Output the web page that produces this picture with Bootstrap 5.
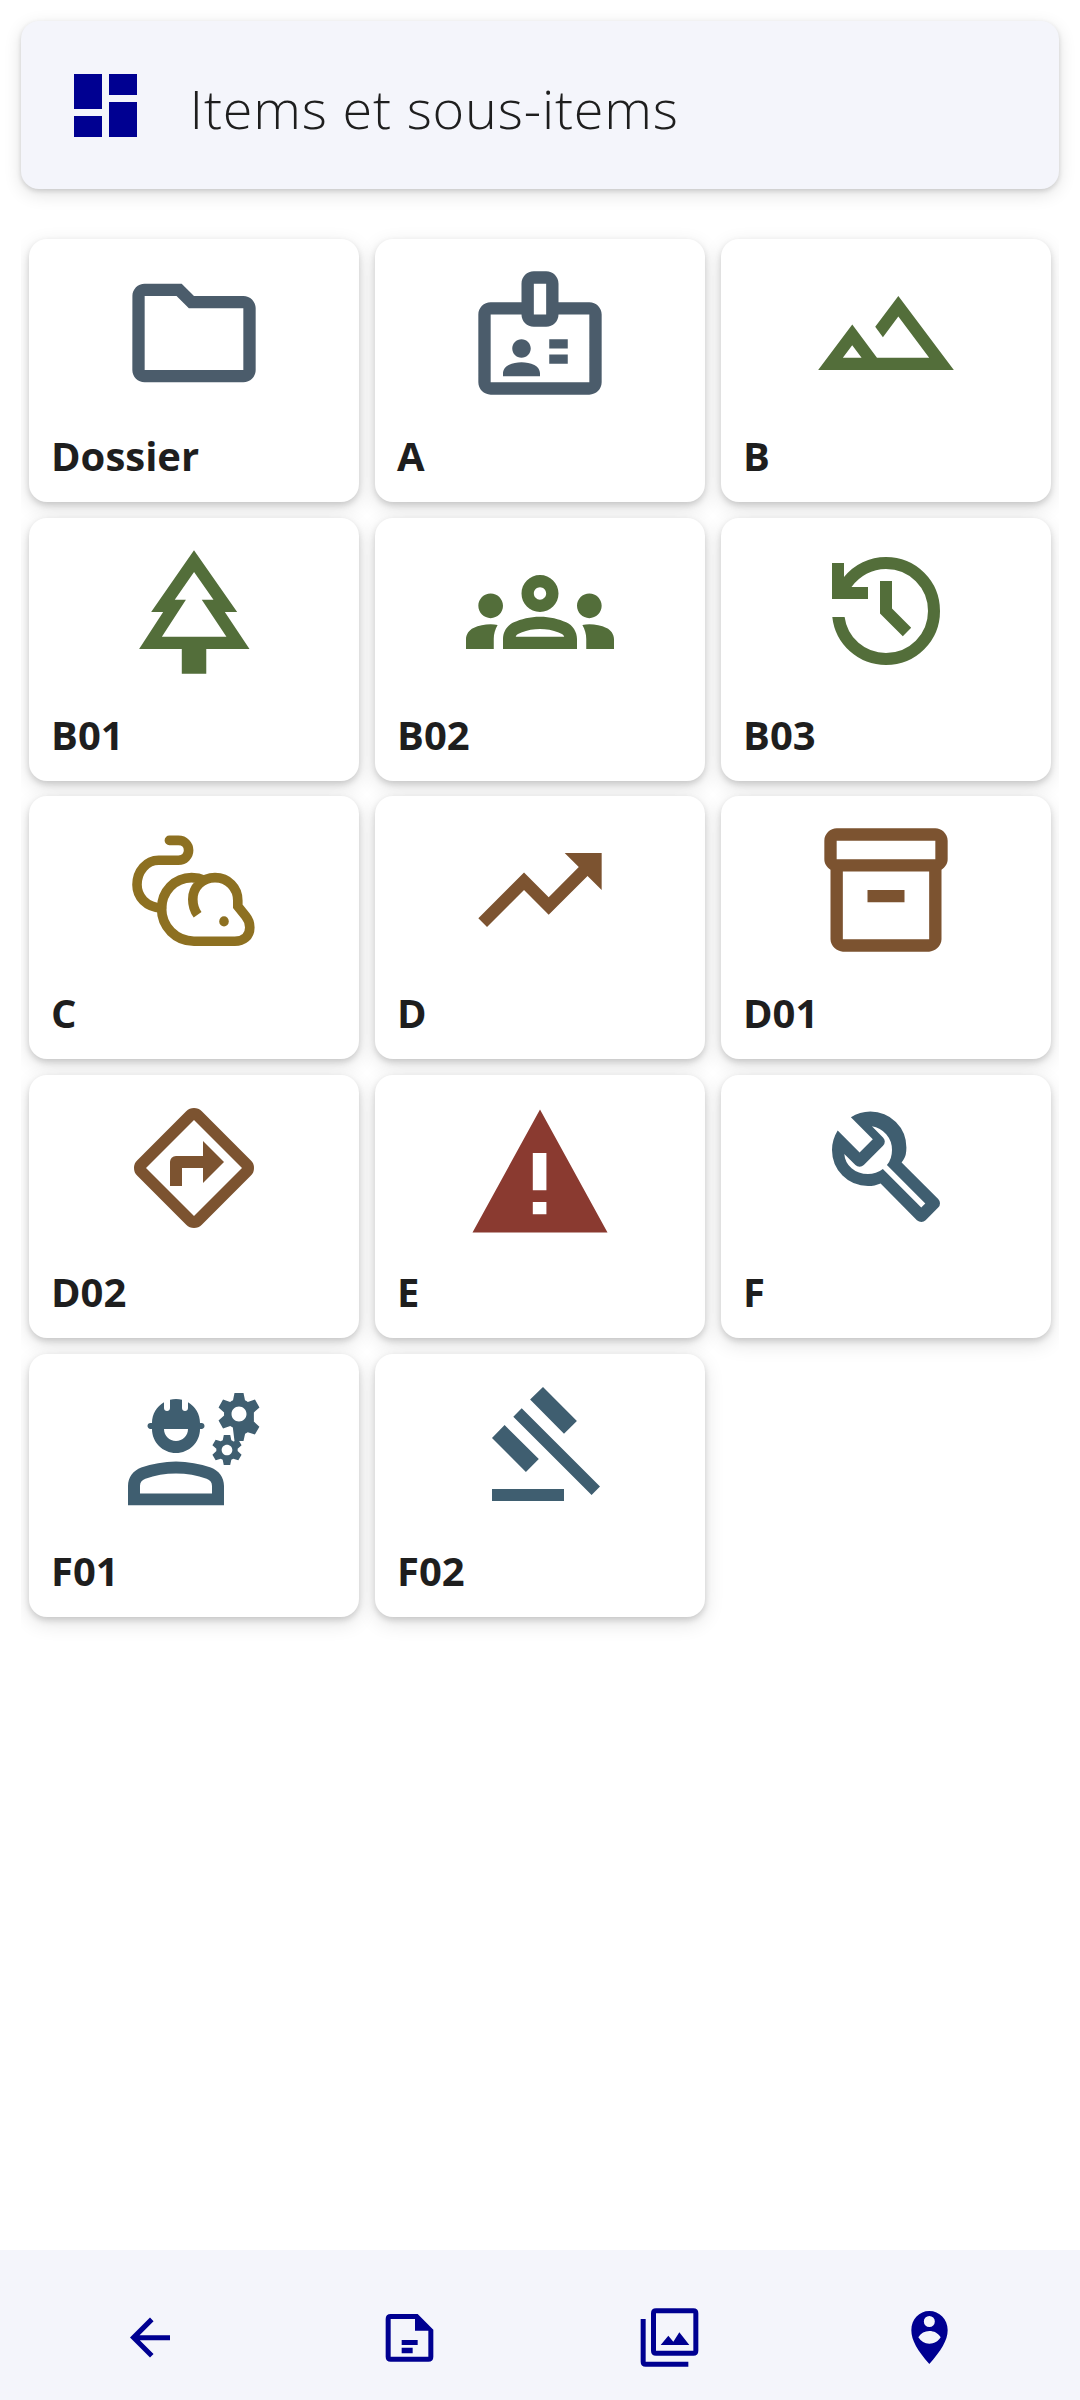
<!DOCTYPE html>
<html lang="fr">
<head>
    <meta charset="UTF-8">
    <meta name="viewport" content="width=device-width, initial-scale=1.0">
    <title>Items et sous-items</title>
    <link href="https://cdn.jsdelivr.net/npm/bootstrap@5.3.0/dist/css/bootstrap.min.css" rel="stylesheet">
    <style>
        html, body { height: 100%; }
        body { font-family: "Open Sans", "Liberation Sans", sans-serif; color: #1e1e1e; background: #fff; }
        .page-wrap { height: 2400px; }
        .head-bar { margin: 21px 21px 0; height: 168px; background: #f4f5fb; border-radius: 18px; padding-left: 52.5px; gap: 53px; box-shadow: 0 2px 5px rgba(0, 0, 0, .14), 0 5px 18px rgba(0, 0, 0, .12); }
        .head-bar svg { width: 63px; height: 63px; fill: #000091; }
        .head-title { font-size: 54px; font-weight: 300; line-height: 1; letter-spacing: .8px; margin: 5px 0 0; }
        .tile-clip { margin: 34px 21px 0; padding: 16px 8px 40px; overflow: hidden; }
        .tile-row { --bs-gutter-x: 16px; --bs-gutter-y: 15.67px; }
        .tile { height: 263px; border: 0; border-radius: 18px; box-shadow: 0 3px 6px rgba(0, 0, 0, .15), 0 6px 20px rgba(0, 0, 0, .12); }
        .tile svg { width: 148px; height: 148px; margin: 20px auto 0; display: block; }
        .tile svg.glyph-fit { width: 144px; height: 144px; margin-top: 21px; }
        .tile-name { font-size: 40px; font-weight: 700; line-height: 1; padding: 0 22px 26px; }
        .tint-slate { fill: #4b5c6b; }
        .tint-green { fill: #536e3a; }
        .tint-gold { fill: #8d7021; }
        .tint-brown { fill: #7c5330; }
        .tint-red { fill: #8a3a30; }
        .tint-blue { fill: #3f5e70; }
        .foot-bar { height: 150px; background: #f4f5fb; padding: 45px 20px 25px; }
        .foot-bar svg { width: 80px; height: 80px; fill: #000091; }
    </style>
</head>
<body>
    <div class="page-wrap d-flex flex-column">
        <div class="head-bar d-flex align-items-center">
            <svg viewBox="3 3 18 18"><path d="M3 13h8V3H3v10zm0 8h8v-6H3v6zm10 0h8V11h-8v10zm0-18v6h8V3h-8z"/></svg>
            <h1 class="head-title">Items et sous-items</h1>
        </div>

        <div class="tile-clip flex-grow-1">
            <div class="row row-cols-3 tile-row">
                <div class="col">
                    <div class="card tile">
                        <svg viewBox="0 0 24 24" class="tint-slate"><path d="M9.17 6l2 2H20v10H4V6h5.17M10 4H4c-1.1 0-1.99.9-1.99 2L2 18c0 1.1.9 2 2 2h16c1.1 0 2-.9 2-2V8c0-1.1-.9-2-2-2h-8l-2-2z"/></svg>
                        <div class="tile-name mt-auto">Dossier</div>
                    </div>
                </div>
                <div class="col">
                    <div class="card tile">
                        <svg viewBox="0 0 24 24" class="tint-slate"><path d="M20 7h-5V4c0-1.1-.9-2-2-2h-2c-1.1 0-2 .9-2 2v3H4c-1.1 0-2 .9-2 2v11c0 1.1.9 2 2 2h16c1.1 0 2-.9 2-2V9c0-1.1-.9-2-2-2zM11 7V4h2v5h-2V7zm9 13H4V9h5c0 1.1.9 2 2 2h2c1.1 0 2-.9 2-2h5v11zm-11-4c.83 0 1.5-.67 1.5-1.5S9.83 13 9 13s-1.5.67-1.5 1.5S8.17 16 9 16zm2.08 1.18c-.64-.28-1.34-.43-2.08-.43s-1.44.15-2.08.43C6.36 17.42 6 17.97 6 18.58V19h6v-.42c0-.61-.36-1.16-.92-1.4zM13.5 13h3v1.5h-3zM13.5 15.5h3V17h-3z"/></svg>
                        <div class="tile-name mt-auto">A</div>
                    </div>
                </div>
                <div class="col">
                    <div class="card tile">
                        <svg viewBox="0 0 24 24" class="tint-green"><path d="M14 6l-3.75 5 1.25 1.67L14 9.33 19 16h-8.46l-4.01-5.37L1 18h22L14 6zM5 16l1.52-2.03L8.04 16H5z"/></svg>
                        <div class="tile-name mt-auto">B</div>
                    </div>
                </div>

                <div class="col">
                    <div class="card tile">
                        <svg viewBox="0 0 24 24" class="tint-green"><path d="M17,12h2L12,2L5.05,12H7l-3.9,6h6.92v4h3.97v-4H21L17,12z M6.79,16l3.9-6H8.88l3.13-4.5l3.15,4.5h-1.9l4,6H6.79z"/></svg>
                        <div class="tile-name mt-auto">B01</div>
                    </div>
                </div>
                <div class="col">
                    <div class="card tile">
                        <svg viewBox="0 0 24 24" class="tint-green"><path d="M4,13c1.1,0,2-0.9,2-2c0-1.1-0.9-2-2-2s-2,0.9-2,2C2,12.1,2.9,13,4,13z M5.13,14.1C4.76,14.04,4.39,14,4,14 c-0.99,0-1.93,0.21-2.78,0.58C0.48,14.9,0,15.62,0,16.43V18l4.5,0v-1.61C4.5,15.56,4.73,14.78,5.13,14.1z M20,13c1.1,0,2-0.9,2-2 c0-1.1-0.9-2-2-2s-2,0.9-2,2C18,12.1,18.9,13,20,13z M24,16.43c0-0.81-0.48-1.53-1.22-1.85C21.93,14.21,20.99,14,20,14 c-0.39,0-0.76,0.04-1.13,0.1c0.4,0.68,0.63,1.46,0.63,2.29V18l4.5,0V16.43z M16.24,13.65c-1.17-0.52-2.61-0.9-4.24-0.9 c-1.63,0-3.07,0.39-4.24,0.9C6.68,14.13,6,15.21,6,16.39V18h12v-1.61C18,15.21,17.32,14.13,16.24,13.65z M8.07,16 c0.09-0.23,0.13-0.39,0.91-0.69c0.97-0.38,1.99-0.56,3.02-0.56s2.05,0.18,3.02,0.56c0.77,0.3,0.81,0.46,0.91,0.69H8.07z M12,8 c0.55,0,1,0.45,1,1s-0.45,1-1,1s-1-0.45-1-1S11.45,8,12,8 M12,6c-1.66,0-3,1.34-3,3c0,1.66,1.34,3,3,3s3-1.34,3-3 C15,7.34,13.66,6,12,6L12,6z"/></svg>
                        <div class="tile-name mt-auto">B02</div>
                    </div>
                </div>
                <div class="col">
                    <div class="card tile">
                        <svg viewBox="0 -960 960 960" class="tint-green glyph-fit"><path d="M480-120q-138 0-240.5-91.5T122-440h82q14 104 92.5 172T480-200q117 0 198.5-81.5T760-480q0-117-81.5-198.5T480-760q-69 0-129 32t-101 88h110v80H120v-240h80v94q51-64 124.5-99T480-840q150 0 255 105t105 255q0 150-105 255T480-120Zm112-192L440-464v-216h80v184l128 128-56 56Z"/></svg>
                        <div class="tile-name mt-auto">B03</div>
                    </div>
                </div>

                <div class="col">
                    <div class="card tile">
                        <svg viewBox="0 0 24 24" class="tint-gold glyph-fit">
                            <g fill="none" stroke="#8d7021" stroke-width="1.6" stroke-linecap="round">
                                <path d="M7.9 3.9h1.5c1 0 1.7.75 1.7 1.65s-.7 1.65-1.7 1.65H6.1c-2 0-3.6 1.8-3.6 4.1 0 2 1.5 3.7 4.1 3.9"/>
                                <path d="M12.6 16.3c-.5-.7-.8-1.6-.8-2.6 0-2 1.6-3.6 3.7-3.6 2.2 0 3.8 1.7 3.8 3.8v1l1.3 1.6c.5.6.7 1.2.7 1.9 0 1.5-1.1 2.3-2.5 2.3H12c-3 0-5.4-2.4-5.4-5.4 0-2.9 2.2-5.2 5-5.2.8 0 1.6.2 2.3.5" stroke-linecap="butt"/>
                            </g>
                            <ellipse cx="17" cy="17.4" rx=".8" ry=".85"/>
                        </svg>
                        <div class="tile-name mt-auto">C</div>
                    </div>
                </div>
                <div class="col">
                    <div class="card tile">
                        <svg viewBox="0 0 24 24" class="tint-brown"><path d="M16 6l2.29 2.29-4.88 4.88-4-4L2 16.59 3.41 18l6-6 4 4 6.3-6.29L22 12V6z"/></svg>
                        <div class="tile-name mt-auto">D</div>
                    </div>
                </div>
                <div class="col">
                    <div class="card tile">
                        <svg viewBox="0 0 24 24" class="tint-brown"><path d="M20 2H4c-1 0-2 .9-2 2v3.01c0 .72.43 1.34 1 1.69V20c0 1.1 1.1 2 2 2h14c.9 0 2-.9 2-2V8.7c.57-.35 1-.97 1-1.69V4c0-1.1-1-2-2-2zm-1 18H5V9h14v11zm1-13H4V4h16v3z"/><path d="M9 12h6v2H9z"/></svg>
                        <div class="tile-name mt-auto">D01</div>
                    </div>
                </div>

                <div class="col">
                    <div class="card tile">
                        <svg viewBox="0 -960 960 960" class="tint-brown glyph-fit" fill-rule="evenodd"><path d="M480-80q-15 0-28-5t-24-17L102-428q-12-11-17-24t-5-28q0-15 5-28t17-24l326-326q11-12 24-17t28-5q15 0 28 5t24 17l326 326q12 11 17 24t5 28q0 15-5 28t-17 24L532-102q-11 12-24 17t-28 5ZM480-160l320-320-320-320-320 320 320 320ZM320-360h80v-120h140v100l140-140-140-140v100H360q-17 0-28.5 11.5T320-520v160Z"/></svg>
                        <div class="tile-name mt-auto">D02</div>
                    </div>
                </div>
                <div class="col">
                    <div class="card tile">
                        <svg viewBox="0 0 24 24" class="tint-red glyph-fit" fill-rule="evenodd"><path d="M.75 22.75h22.5L12 2.25zM10.8 9.5h2.27v6.2H10.8zM10.8 17.65h2.27v2.05H10.8z"/></svg>
                        <div class="tile-name mt-auto">E</div>
                    </div>
                </div>
                <div class="col">
                    <div class="card tile">
                        <svg viewBox="0 -960 960 960" class="tint-blue glyph-fit"><path d="M686-132 444-376q-20 8-40.5 12t-43.5 4q-100 0-170-70t-70-170q0-36 10-68.5t28-61.5l146 146 88-88-146-146q29-18 61.5-28t68.5-10q100 0 170 70t70 170q0 23-4 43.5T584-516l244 242q12 12 12 29t-12 29l-84 84q-12 12-28 12t-30-12Zm29-85 27-27-256-256q18-20 26-46.5t8-53.5q0-60-38.5-104.5T386-758l74 74q12 12 12 28t-12 28L332-500q-12 12-28 12t-28-12l-74-74q4 57 48.5 95.5T360-440q26 0 52-8t47-25l256 256Z"/></svg>
                        <div class="tile-name mt-auto">F</div>
                    </div>
                </div>

                <div class="col">
                    <div class="card tile">
                        <svg viewBox="0 0 24 24" class="tint-blue glyph-fit">
                            <path fill-rule="evenodd" d="M1 21.7v-3.2c0-1.5.9-2.6 2.2-3.1C5 14.8 7 14.4 9 14.4s4 .4 5.8 1c1.3.5 2.2 1.6 2.2 3.1v3.2zM3 19.75h12V18.5c0-.6-.3-1-.9-1.2C12.5 16.7 10.8 16.4 9 16.4s-3.5.3-5.1.9c-.6.2-.9.6-.9 1.2z"/>
                            <path d="M4.74 9H5c0 2.21 1.79 4 4 4s4-1.79 4-4h.26c.27 0 .49-.22.49-.49v-.02c0-.27-.22-.49-.49-.49H13c0-1.48-.81-2.75-2-3.45v.95c0 .28-.22.5-.5.5s-.5-.22-.5-.5V4.14C9.68 4.06 9.35 4 9 4s-.68.06-1 .14V5.5c0 .28-.22.5-.5.5S7 5.78 7 5.5v-.95C5.81 5.25 5 6.52 5 8h-.26c-.27 0-.49.22-.49.49v.03c0 .26.22.48.49.48zM11 9c0 1.1-.9 2-2 2s-2-.9-2-2h4zM21.98 6.23l.93-.83-.75-1.3-1.19.39c-.14-.11-.3-.2-.47-.27L20.25 3h-1.5l-.25 1.22c-.17.07-.33.16-.48.27l-1.18-.39-.75 1.3.93.83c-.02.17-.02.35 0 .52l-.93.85.75 1.3 1.2-.38c.13.1.28.18.43.25L18.75 11h1.5l.27-1.22c.16-.07.3-.15.44-.25l1.19.38.75-1.3-.93-.85c.03-.19.02-.36.01-.53zM19.5 7.75c-.69 0-1.25-.56-1.25-1.25s.56-1.25 1.25-1.25 1.25.56 1.25 1.25-.56 1.25-1.25 1.25zM19.4 10.79l-.85.28c-.1-.08-.21-.14-.33-.19L18.04 10h-1.07l-.18.87c-.12.05-.24.12-.34.19l-.84-.28-.54.93.66.59c-.01.13-.01.25 0 .37l-.66.61.54.93.86-.27c.1.07.2.13.31.18l.18.88h1.07l.19-.87c.11-.05.22-.11.32-.18l.85.27.54-.93-.66-.61c.01-.13.01-.25 0-.37l.66-.59-.53-.93zM17.5 13.39c-.49 0-.89-.4-.89-.89 0-.49.4-.89.89-.89s.89.4.89.89c0 .49-.4.89-.89.89z"/>
                        </svg>
                        <div class="tile-name mt-auto">F01</div>
                    </div>
                </div>
                <div class="col">
                    <div class="card tile">
                        <svg viewBox="0 -960 960 960" class="tint-blue glyph-fit"><path d="M160-120v-80h480v80H160Zm226-194L160-540l84-86 228 226-86 86Zm254-254L414-796l86-84 226 226-86 86Zm184 408L302-682l56-56 522 522-56 56Z"/></svg>
                        <div class="tile-name mt-auto">F02</div>
                    </div>
                </div>
            </div>
        </div>

        <div class="foot-bar d-flex justify-content-around">
            <svg viewBox="-160 -1160 1280 1280"><path d="m313-440 224 224-57 57-320-320 320-320 57 57-224 224h487v80H313Z"/></svg>
            <svg viewBox="0 0 240 240" fill-rule="evenodd"><path d="M62 57h81l47 47v81q0 15-15 15H62q-15 0-15-15V72q0-15 15-15zM62 72v113h113V107h-40V72z"/><path d="M95 135h48v15H95zM95 158h33v17H95z"/></svg>
            <svg viewBox="0 0 240 240" fill-rule="evenodd"><path d="M78 40h112q15 0 15 15v112q0 15-15 15H78q-15 0-15-15V55q0-15 15-15zM78 55v112h112V55z"/><path d="M32 72h15v128h128v15H47q-15 0-15-15z"/><path d="M92 150l23-28 15 18 18-28 30 38z"/></svg>
            <svg viewBox="0 0 240 240" fill-rule="evenodd"><path d="M118 48c30 0 55 24 55 58 0 30-20 62-55 101-35-39-54-71-54-101 0-34 24-58 54-58zM118 63a16 16 0 1 0 0 33 16 16 0 0 0 0-33zM118 108c-14 0-25 6-33 19 8 13 19 19 33 19s26-6 34-19c-8-13-20-19-34-19z"/></svg>
        </div>
    </div>

    <script src="https://cdn.jsdelivr.net/npm/bootstrap@5.3.0/dist/js/bootstrap.bundle.min.js"></script>
</body>
</html>
